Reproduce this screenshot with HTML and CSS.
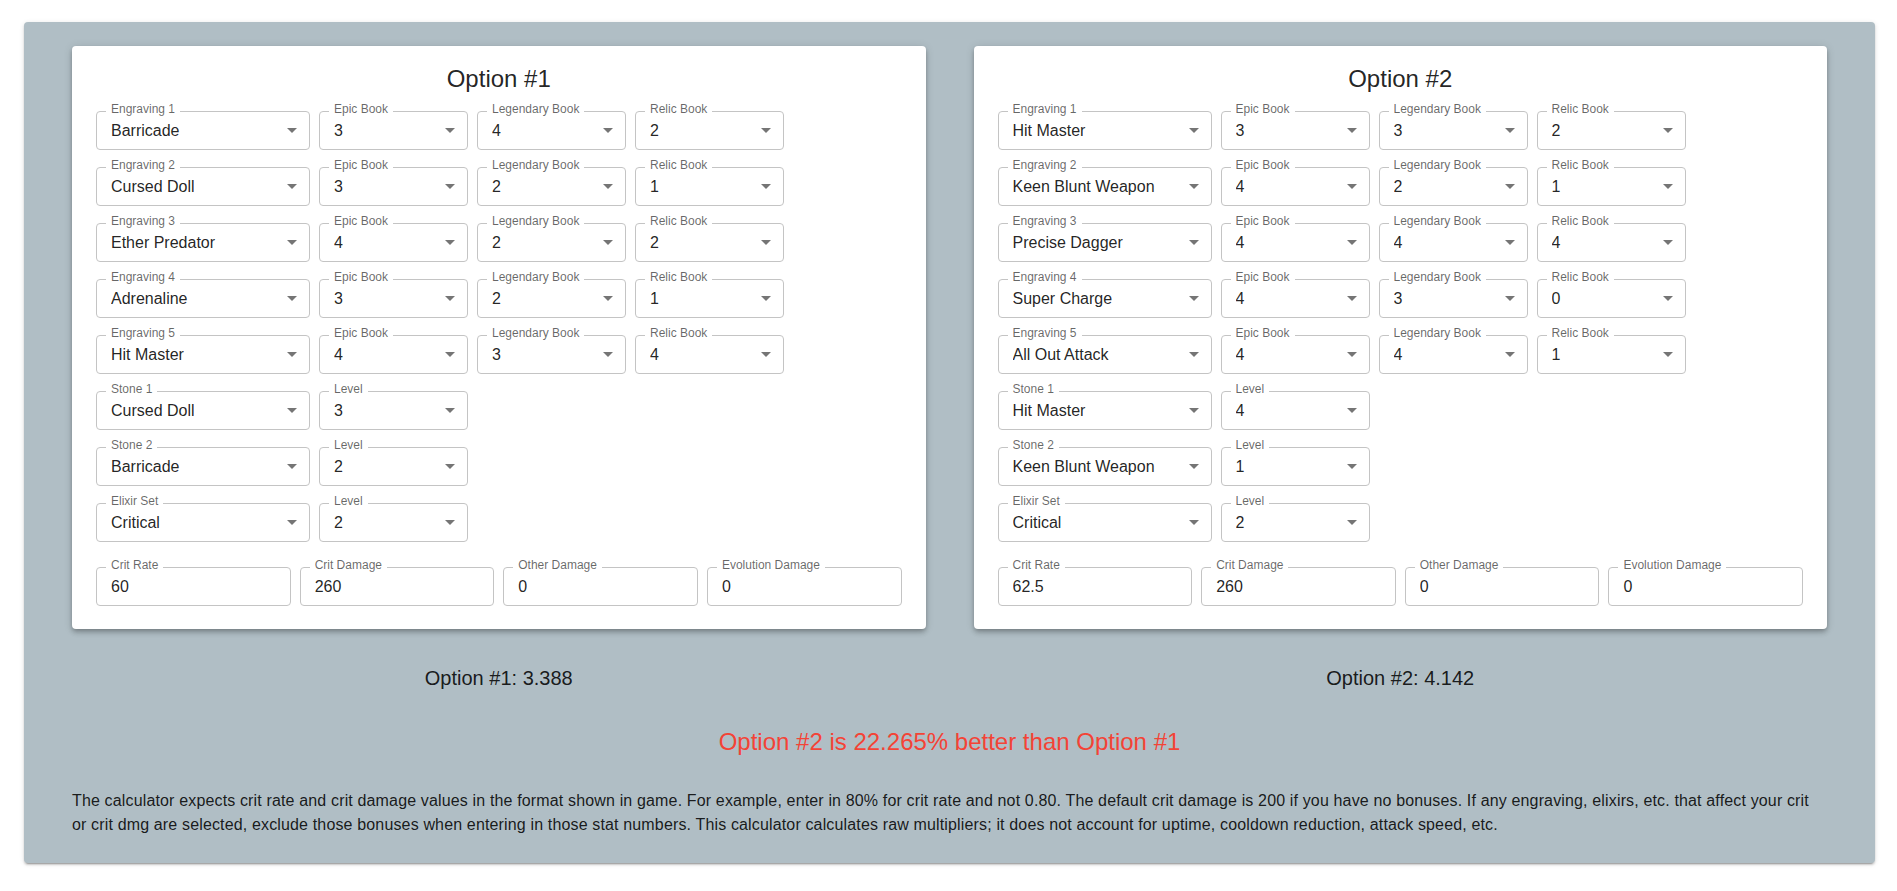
FILE: index.html
```html
<!DOCTYPE html>
<html lang="en">
<head>
<meta charset="utf-8">
<title>Engraving Calculator</title>
<link rel="stylesheet" href="styles.css">
</head>
<body>
<main class="panel">
  <div class="cards">
    <section class="card">
      <h2 class="card-title">Option #1</h2>
      <div class="rows">
        <div class="row">
          <div class="field w-eng"><span class="lbl">Engraving 1</span><span class="val">Barricade</span><svg class="arrow" viewBox="0 0 10 5"><path d="M0 0l5 5 5-5z"/></svg></div>
          <div class="field w-book"><span class="lbl">Epic Book</span><span class="val">3</span><svg class="arrow" viewBox="0 0 10 5"><path d="M0 0l5 5 5-5z"/></svg></div>
          <div class="field w-book"><span class="lbl">Legendary Book</span><span class="val">4</span><svg class="arrow" viewBox="0 0 10 5"><path d="M0 0l5 5 5-5z"/></svg></div>
          <div class="field w-book"><span class="lbl">Relic Book</span><span class="val">2</span><svg class="arrow" viewBox="0 0 10 5"><path d="M0 0l5 5 5-5z"/></svg></div>
        </div>
        <div class="row">
          <div class="field w-eng"><span class="lbl">Engraving 2</span><span class="val">Cursed Doll</span><svg class="arrow" viewBox="0 0 10 5"><path d="M0 0l5 5 5-5z"/></svg></div>
          <div class="field w-book"><span class="lbl">Epic Book</span><span class="val">3</span><svg class="arrow" viewBox="0 0 10 5"><path d="M0 0l5 5 5-5z"/></svg></div>
          <div class="field w-book"><span class="lbl">Legendary Book</span><span class="val">2</span><svg class="arrow" viewBox="0 0 10 5"><path d="M0 0l5 5 5-5z"/></svg></div>
          <div class="field w-book"><span class="lbl">Relic Book</span><span class="val">1</span><svg class="arrow" viewBox="0 0 10 5"><path d="M0 0l5 5 5-5z"/></svg></div>
        </div>
        <div class="row">
          <div class="field w-eng"><span class="lbl">Engraving 3</span><span class="val">Ether Predator</span><svg class="arrow" viewBox="0 0 10 5"><path d="M0 0l5 5 5-5z"/></svg></div>
          <div class="field w-book"><span class="lbl">Epic Book</span><span class="val">4</span><svg class="arrow" viewBox="0 0 10 5"><path d="M0 0l5 5 5-5z"/></svg></div>
          <div class="field w-book"><span class="lbl">Legendary Book</span><span class="val">2</span><svg class="arrow" viewBox="0 0 10 5"><path d="M0 0l5 5 5-5z"/></svg></div>
          <div class="field w-book"><span class="lbl">Relic Book</span><span class="val">2</span><svg class="arrow" viewBox="0 0 10 5"><path d="M0 0l5 5 5-5z"/></svg></div>
        </div>
        <div class="row">
          <div class="field w-eng"><span class="lbl">Engraving 4</span><span class="val">Adrenaline</span><svg class="arrow" viewBox="0 0 10 5"><path d="M0 0l5 5 5-5z"/></svg></div>
          <div class="field w-book"><span class="lbl">Epic Book</span><span class="val">3</span><svg class="arrow" viewBox="0 0 10 5"><path d="M0 0l5 5 5-5z"/></svg></div>
          <div class="field w-book"><span class="lbl">Legendary Book</span><span class="val">2</span><svg class="arrow" viewBox="0 0 10 5"><path d="M0 0l5 5 5-5z"/></svg></div>
          <div class="field w-book"><span class="lbl">Relic Book</span><span class="val">1</span><svg class="arrow" viewBox="0 0 10 5"><path d="M0 0l5 5 5-5z"/></svg></div>
        </div>
        <div class="row">
          <div class="field w-eng"><span class="lbl">Engraving 5</span><span class="val">Hit Master</span><svg class="arrow" viewBox="0 0 10 5"><path d="M0 0l5 5 5-5z"/></svg></div>
          <div class="field w-book"><span class="lbl">Epic Book</span><span class="val">4</span><svg class="arrow" viewBox="0 0 10 5"><path d="M0 0l5 5 5-5z"/></svg></div>
          <div class="field w-book"><span class="lbl">Legendary Book</span><span class="val">3</span><svg class="arrow" viewBox="0 0 10 5"><path d="M0 0l5 5 5-5z"/></svg></div>
          <div class="field w-book"><span class="lbl">Relic Book</span><span class="val">4</span><svg class="arrow" viewBox="0 0 10 5"><path d="M0 0l5 5 5-5z"/></svg></div>
        </div>
        <div class="row">
          <div class="field w-eng"><span class="lbl">Stone 1</span><span class="val">Cursed Doll</span><svg class="arrow" viewBox="0 0 10 5"><path d="M0 0l5 5 5-5z"/></svg></div>
          <div class="field w-book"><span class="lbl">Level</span><span class="val">3</span><svg class="arrow" viewBox="0 0 10 5"><path d="M0 0l5 5 5-5z"/></svg></div>
        </div>
        <div class="row">
          <div class="field w-eng"><span class="lbl">Stone 2</span><span class="val">Barricade</span><svg class="arrow" viewBox="0 0 10 5"><path d="M0 0l5 5 5-5z"/></svg></div>
          <div class="field w-book"><span class="lbl">Level</span><span class="val">2</span><svg class="arrow" viewBox="0 0 10 5"><path d="M0 0l5 5 5-5z"/></svg></div>
        </div>
        <div class="row">
          <div class="field w-eng"><span class="lbl">Elixir Set</span><span class="val">Critical</span><svg class="arrow" viewBox="0 0 10 5"><path d="M0 0l5 5 5-5z"/></svg></div>
          <div class="field w-book"><span class="lbl">Level</span><span class="val">2</span><svg class="arrow" viewBox="0 0 10 5"><path d="M0 0l5 5 5-5z"/></svg></div>
        </div>
      </div>
      <div class="stats">
        <div class="field"><span class="lbl">Crit Rate</span><span class="val">60</span></div>
        <div class="field"><span class="lbl">Crit Damage</span><span class="val">260</span></div>
        <div class="field"><span class="lbl">Other Damage</span><span class="val">0</span></div>
        <div class="field"><span class="lbl">Evolution Damage</span><span class="val">0</span></div>
      </div>
    </section>

    <section class="card">
      <h2 class="card-title">Option #2</h2>
      <div class="rows">
        <div class="row">
          <div class="field w-eng"><span class="lbl">Engraving 1</span><span class="val">Hit Master</span><svg class="arrow" viewBox="0 0 10 5"><path d="M0 0l5 5 5-5z"/></svg></div>
          <div class="field w-book"><span class="lbl">Epic Book</span><span class="val">3</span><svg class="arrow" viewBox="0 0 10 5"><path d="M0 0l5 5 5-5z"/></svg></div>
          <div class="field w-book"><span class="lbl">Legendary Book</span><span class="val">3</span><svg class="arrow" viewBox="0 0 10 5"><path d="M0 0l5 5 5-5z"/></svg></div>
          <div class="field w-book"><span class="lbl">Relic Book</span><span class="val">2</span><svg class="arrow" viewBox="0 0 10 5"><path d="M0 0l5 5 5-5z"/></svg></div>
        </div>
        <div class="row">
          <div class="field w-eng"><span class="lbl">Engraving 2</span><span class="val">Keen Blunt Weapon</span><svg class="arrow" viewBox="0 0 10 5"><path d="M0 0l5 5 5-5z"/></svg></div>
          <div class="field w-book"><span class="lbl">Epic Book</span><span class="val">4</span><svg class="arrow" viewBox="0 0 10 5"><path d="M0 0l5 5 5-5z"/></svg></div>
          <div class="field w-book"><span class="lbl">Legendary Book</span><span class="val">2</span><svg class="arrow" viewBox="0 0 10 5"><path d="M0 0l5 5 5-5z"/></svg></div>
          <div class="field w-book"><span class="lbl">Relic Book</span><span class="val">1</span><svg class="arrow" viewBox="0 0 10 5"><path d="M0 0l5 5 5-5z"/></svg></div>
        </div>
        <div class="row">
          <div class="field w-eng"><span class="lbl">Engraving 3</span><span class="val">Precise Dagger</span><svg class="arrow" viewBox="0 0 10 5"><path d="M0 0l5 5 5-5z"/></svg></div>
          <div class="field w-book"><span class="lbl">Epic Book</span><span class="val">4</span><svg class="arrow" viewBox="0 0 10 5"><path d="M0 0l5 5 5-5z"/></svg></div>
          <div class="field w-book"><span class="lbl">Legendary Book</span><span class="val">4</span><svg class="arrow" viewBox="0 0 10 5"><path d="M0 0l5 5 5-5z"/></svg></div>
          <div class="field w-book"><span class="lbl">Relic Book</span><span class="val">4</span><svg class="arrow" viewBox="0 0 10 5"><path d="M0 0l5 5 5-5z"/></svg></div>
        </div>
        <div class="row">
          <div class="field w-eng"><span class="lbl">Engraving 4</span><span class="val">Super Charge</span><svg class="arrow" viewBox="0 0 10 5"><path d="M0 0l5 5 5-5z"/></svg></div>
          <div class="field w-book"><span class="lbl">Epic Book</span><span class="val">4</span><svg class="arrow" viewBox="0 0 10 5"><path d="M0 0l5 5 5-5z"/></svg></div>
          <div class="field w-book"><span class="lbl">Legendary Book</span><span class="val">3</span><svg class="arrow" viewBox="0 0 10 5"><path d="M0 0l5 5 5-5z"/></svg></div>
          <div class="field w-book"><span class="lbl">Relic Book</span><span class="val">0</span><svg class="arrow" viewBox="0 0 10 5"><path d="M0 0l5 5 5-5z"/></svg></div>
        </div>
        <div class="row">
          <div class="field w-eng"><span class="lbl">Engraving 5</span><span class="val">All Out Attack</span><svg class="arrow" viewBox="0 0 10 5"><path d="M0 0l5 5 5-5z"/></svg></div>
          <div class="field w-book"><span class="lbl">Epic Book</span><span class="val">4</span><svg class="arrow" viewBox="0 0 10 5"><path d="M0 0l5 5 5-5z"/></svg></div>
          <div class="field w-book"><span class="lbl">Legendary Book</span><span class="val">4</span><svg class="arrow" viewBox="0 0 10 5"><path d="M0 0l5 5 5-5z"/></svg></div>
          <div class="field w-book"><span class="lbl">Relic Book</span><span class="val">1</span><svg class="arrow" viewBox="0 0 10 5"><path d="M0 0l5 5 5-5z"/></svg></div>
        </div>
        <div class="row">
          <div class="field w-eng"><span class="lbl">Stone 1</span><span class="val">Hit Master</span><svg class="arrow" viewBox="0 0 10 5"><path d="M0 0l5 5 5-5z"/></svg></div>
          <div class="field w-book"><span class="lbl">Level</span><span class="val">4</span><svg class="arrow" viewBox="0 0 10 5"><path d="M0 0l5 5 5-5z"/></svg></div>
        </div>
        <div class="row">
          <div class="field w-eng"><span class="lbl">Stone 2</span><span class="val">Keen Blunt Weapon</span><svg class="arrow" viewBox="0 0 10 5"><path d="M0 0l5 5 5-5z"/></svg></div>
          <div class="field w-book"><span class="lbl">Level</span><span class="val">1</span><svg class="arrow" viewBox="0 0 10 5"><path d="M0 0l5 5 5-5z"/></svg></div>
        </div>
        <div class="row">
          <div class="field w-eng"><span class="lbl">Elixir Set</span><span class="val">Critical</span><svg class="arrow" viewBox="0 0 10 5"><path d="M0 0l5 5 5-5z"/></svg></div>
          <div class="field w-book"><span class="lbl">Level</span><span class="val">2</span><svg class="arrow" viewBox="0 0 10 5"><path d="M0 0l5 5 5-5z"/></svg></div>
        </div>
      </div>
      <div class="stats">
        <div class="field"><span class="lbl">Crit Rate</span><span class="val">62.5</span></div>
        <div class="field"><span class="lbl">Crit Damage</span><span class="val">260</span></div>
        <div class="field"><span class="lbl">Other Damage</span><span class="val">0</span></div>
        <div class="field"><span class="lbl">Evolution Damage</span><span class="val">0</span></div>
      </div>
    </section>
  </div>

  <div class="scores">
    <p class="score">Option #1: 3.388</p>
    <p class="score">Option #2: 4.142</p>
  </div>

  <p class="verdict">Option #2 is 22.265% better than Option #1</p>

  <p class="note">The calculator expects crit rate and crit damage values in the format shown in game. For example, enter in 80% for crit rate and not 0.80. The default crit damage is 200 if you have no bonuses. If any engraving, elixirs, etc. that affect your crit<br>or crit dmg are selected, exclude those bonuses when entering in those stat numbers. This calculator calculates raw multipliers; it does not account for uptime, cooldown reduction, attack speed, etc.</p>
</main>
</body>
</html>
```

FILE: styles.css
```css
html, body {
  margin: 0;
  padding: 0;
  background: #ffffff;
}

body {
  font-family: "Liberation Sans", Arial, sans-serif;
  color: rgba(0, 0, 0, 0.87);
}

.panel {
  margin: 22px 22px 28px 24px;
  padding: 24px 48px 26px;
  background: #b0bec5;
  border-radius: 4px;
  box-shadow: 0 3px 1px -2px rgba(0, 0, 0, 0.2), 0 2px 2px 0 rgba(0, 0, 0, 0.14), 0 1px 5px 0 rgba(0, 0, 0, 0.12);
}

.cards {
  display: grid;
  grid-template-columns: 1fr 1fr;
  column-gap: 48px;
}

.card {
  background: #ffffff;
  border-radius: 4px;
  padding: 17px 24px 23px;
  box-shadow: 0 2px 4px -1px rgba(0, 0, 0, 0.2), 0 4px 5px 0 rgba(0, 0, 0, 0.14), 0 1px 10px 0 rgba(0, 0, 0, 0.12);
}

.card-title {
  margin: 0 0 16px;
  font-size: 24px;
  line-height: 32px;
  font-weight: 400;
  text-align: center;
  color: rgba(0, 0, 0, 0.87);
}

.rows {
  display: flex;
  flex-direction: column;
  gap: 17px;
}

.row {
  display: flex;
  gap: 9px;
}

.field {
  position: relative;
  display: flex;
  align-items: center;
  box-sizing: border-box;
  height: 39px;
  padding: 0 12px 0 14px;
  border: 1px solid #c4c4c4;
  border-radius: 4px;
  background: #ffffff;
}

.w-eng {
  width: 214px;
}

.w-book {
  width: 149px;
}

.lbl {
  position: absolute;
  top: -9px;
  left: 9px;
  padding: 0 5px;
  background: #ffffff;
  font-size: 12px;
  line-height: 12px;
  color: rgba(0, 0, 0, 0.6);
  white-space: nowrap;
}

.val {
  flex: 1;
  font-size: 16px;
  line-height: 19px;
  color: rgba(0, 0, 0, 0.87);
  white-space: nowrap;
  overflow: hidden;
}

.arrow {
  width: 10px;
  height: 5px;
  fill: rgba(0, 0, 0, 0.54);
  flex: none;
}

.stats {
  display: grid;
  grid-template-columns: repeat(4, 1fr);
  column-gap: 9px;
  margin-top: 25px;
}

.scores {
  display: grid;
  grid-template-columns: 1fr 1fr;
  column-gap: 48px;
  margin-top: 34px;
}

.score {
  margin: 0;
  font-size: 20px;
  line-height: 30px;
  text-align: center;
  color: rgba(0, 0, 0, 0.87);
}

.verdict {
  margin: 31px 0 0;
  font-size: 24px;
  line-height: 36px;
  text-align: center;
  color: #f44336;
}

.note {
  margin: 29px 0 0;
  font-size: 16px;
  line-height: 24px;
  letter-spacing: 0.15px;
  color: rgba(0, 0, 0, 0.87);
}
```
